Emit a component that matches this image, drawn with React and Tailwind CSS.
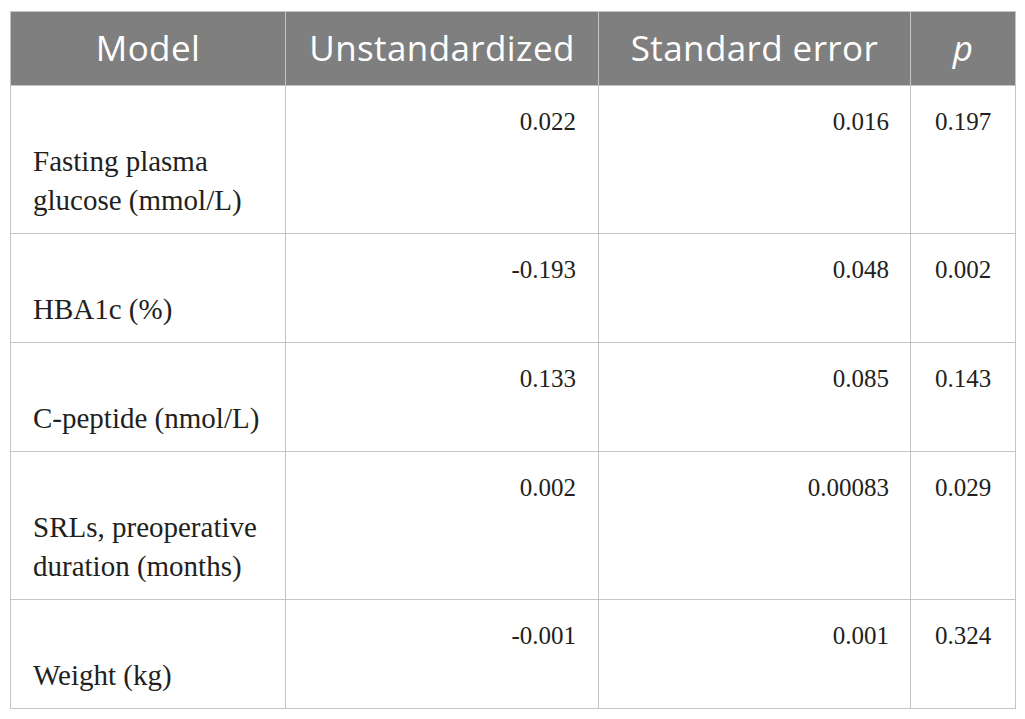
import React from "react";

const rows = [
  { label: ["Fasting plasma", "glucose (mmol/L)"], u: "0.022", se: "0.016", p: "0.197" },
  { label: ["HBA1c (%)"], u: "-0.193", se: "0.048", p: "0.002" },
  { label: ["C-peptide (nmol/L)"], u: "0.133", se: "0.085", p: "0.143" },
  { label: ["SRLs, preoperative", "duration (months)"], u: "0.002", se: "0.00083", p: "0.029" },
  { label: ["Weight (kg)"], u: "-0.001", se: "0.001", p: "0.324" },
];

export default function App() {
  return (
    <div className="bg-white w-[1025px] h-[719px] pt-[11px] pl-[10px]">
      <table
        className="border-collapse border border-[#c4c4c4] text-[#231f20]"
        style={{ tableLayout: "fixed", width: "1005px" }}
      >
        <colgroup>
          <col className="w-[275px]" />
          <col className="w-[313px]" />
          <col className="w-[312px]" />
          <col className="w-[105px]" />
        </colgroup>
        <thead>
          <tr className="bg-[#7f7f7f] h-[74px] text-white text-[35px] tracking-[0.4px] font-['Open_Sans',sans-serif]">
            <th className="font-normal text-center border border-[#c4c4c4] align-middle">Model</th>
            <th className="font-normal text-center border border-[#c4c4c4] align-middle">Unstandardized</th>
            <th className="font-normal text-center border border-[#c4c4c4] align-middle">Standard error</th>
            <th className="font-normal italic text-center border border-[#c4c4c4] align-middle">p</th>
          </tr>
        </thead>
        <tbody className="font-['Liberation_Serif',serif]">
          {rows.map((r, i) => (
            <tr key={i}>
              <td className="border border-[#c4c4c4] align-top pl-[22px] pr-2 pt-[56px] pb-[13px] text-[29px] leading-[39px]">
                {r.label.map((l, j) => (
                  <div key={j} className="whitespace-nowrap">{l}</div>
                ))}
              </td>
              <td className="border border-[#c4c4c4] align-top text-right pr-[22px] pt-[16px] text-[25px] leading-[39px]">
                {r.u}
              </td>
              <td className="border border-[#c4c4c4] align-top text-right pr-[21px] pt-[16px] text-[25px] leading-[39px]">
                {r.se}
              </td>
              <td className="border border-[#c4c4c4] align-top text-center pt-[16px] text-[25px] leading-[39px]">
                {r.p}
              </td>
            </tr>
          ))}
        </tbody>
      </table>
    </div>
  );
}
